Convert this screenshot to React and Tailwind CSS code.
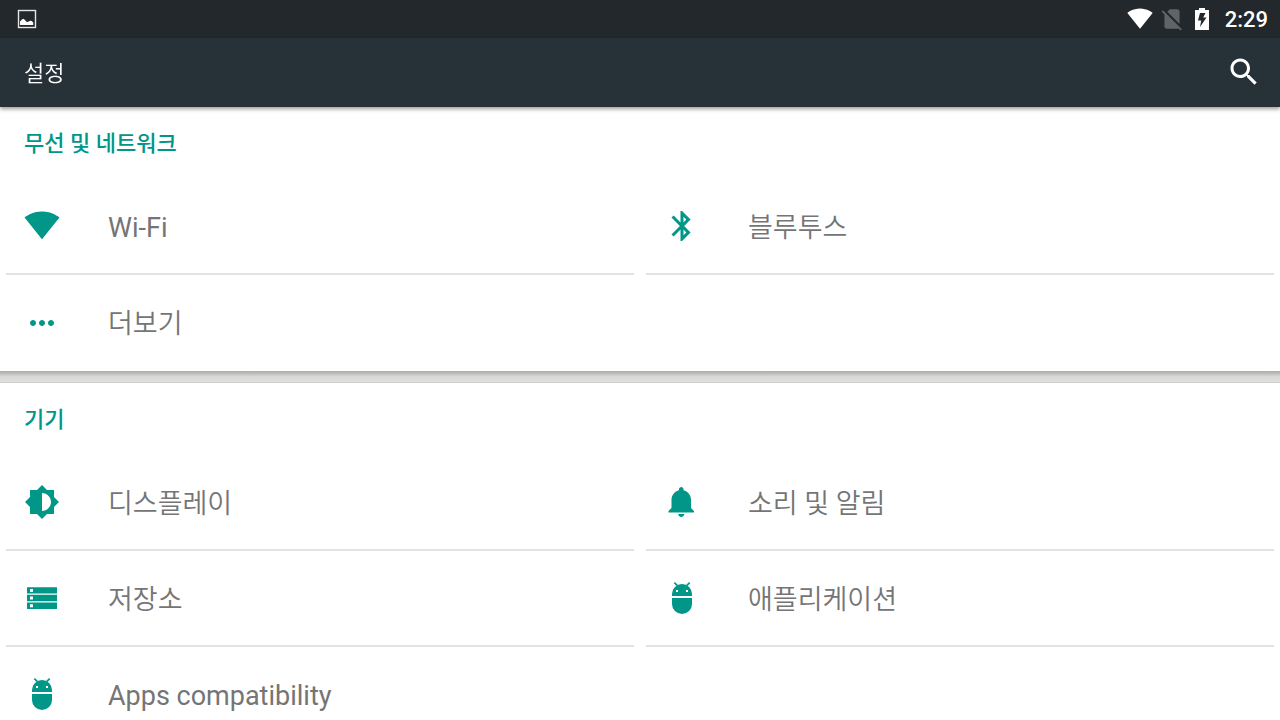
import clsx from 'clsx';

const ICONS = {
  wifi: 'M12.01 20.9L23.64 6.4c-.45-.34-4.93-4-11.64-4C5.28 2.4.81 6.06.36 6.4l11.63 14.49.01.01.01-.01z',
  bluetooth:
    'M17.71 7.71L12 2h-1v7.59L6.41 5 5 6.41 10.59 12 5 17.59 6.41 19 11 14.41V22h1l5.71-5.71-4.3-4.29 4.3-4.29zM13 5.83l1.88 1.88L13 9.59V5.83zm1.88 10.46L13 18.17v-3.76l1.88 1.88z',
  more: 'M6 10.67c-1.1 0-2 .9-2 2s.9 2 2 2 2-.9 2-2-.9-2-2-2zm12 0c-1.1 0-2 .9-2 2s.9 2 2 2 2-.9 2-2-.9-2-2-2zm-6 0c-1.1 0-2 .9-2 2s.9 2 2 2 2-.9 2-2-.9-2-2-2z',
  display:
    'M20 15.31L23.31 12 20 8.69V4h-4.69L12 .69 8.69 4H4v4.69L.69 12 4 15.31V20h4.69L12 23.31 15.31 20H20v-4.69zM12 18V6c3.31 0 6 2.69 6 6s-2.69 6-6 6z',
  sound:
    'M11.5 22c1.1 0 2-.9 2-2h-4c0 1.1.9 2 2 2zm6.5-6v-5.5c0-3.07-2.13-5.64-5-6.32V3.5c0-.83-.67-1.5-1.5-1.5S10 2.67 10 3.5v.68c-2.87.68-5 3.25-5 6.32V16l-2 2v1h17v-1l-2-2z',
  storage:
    'M2 4.8v4.2h20V4.8H2zm4 3.2H4V6h2v2zM2 9.9v4.2h20V9.9H2zm4 3.1H4v-2h2v2zM2 15v4.3h20V15H2zm4 3.2H4v-2h2v2z',
  android:
    'M5.33 12h13.34v4a6.67 6.67 0 0 1-13.34 0zM5.33 10.67V9.33a6.67 6.67 0 0 1 13.34 0v1.34zM8 6.67V8h1.33V6.67zM14.67 6.67V8H16V6.67zM7.3 1.3l2 2-1 .7-1.8-1.9zM16.7 1.3l-2 2 1 .7 1.8-1.9z',
  search:
    'M15.5 14h-.79l-.28-.27C15.41 12.59 16 11.11 16 9.5 16 5.91 13.09 3 9.5 3S3 5.91 3 9.5 5.91 16 9.5 16c1.61 0 3.09-.59 4.23-1.57l.27.28v.79l5 4.99L20.49 19l-4.99-5zm-6 0C7.01 14 5 11.99 5 9.5S7.01 5 9.5 5 14 7.01 14 9.5 11.99 14 9.5 14z',
  noSim:
    'M18.99 5c0-1.1-.89-2-1.99-2h-7L7.66 5.34 19 16.68 18.99 5zM3.65 3.88L2.38 5.15 5 7.77V19c0 1.1.9 2 2 2h10.01c.35 0 .67-.1.96-.26l1.88 1.88 1.27-1.27L3.65 3.88z',
};

const SECTIONS = [
  {
    title: '무선 및 네트워크',
    items: [
      { icon: 'wifi', label: 'Wi-Fi' },
      { icon: 'bluetooth', label: '블루투스' },
      { icon: 'more', label: '더보기' },
    ],
  },
  {
    title: '기기',
    items: [
      { icon: 'display', label: '디스플레이' },
      { icon: 'sound', label: '소리 및 알림' },
      { icon: 'storage', label: '저장소' },
      { icon: 'android', label: '애플리케이션' },
      { icon: 'android', label: 'Apps compatibility' },
    ],
  },
];

// Hangul is set lighter so that its strokes sit evenly beside Roboto
const isHangul = (text) => /[가-힣]/.test(text);

const Icon = ({ name, className }) => (
  <svg viewBox="0 0 24 24" fill="currentColor" fillRule="evenodd" aria-hidden="true" className={className}>
    <path d={ICONS[name]} />
  </svg>
);

const StatusBar = () => (
  <div className="flex h-[38px] shrink-0 items-center justify-between bg-[#22282b] pr-3 pl-[17px] text-white">
    {/* Screenshot notification */}
    <svg viewBox="0 0 20 20" className="size-5" aria-hidden="true">
      <rect x="1.5" y="1.5" width="17" height="17" fill="none" stroke="#e4e5e5" strokeWidth="1.4" />
      <path d="M3 16v-3.500l2-2 1.200-.8 1.500 1 2 2.300 1.500-.3 2-1 1.500.3 1.500 1.500V16z" fill="#fff" />
    </svg>
    <div className="flex items-center">
      <Icon name="wifi" className="size-[26px]" />
      <Icon name="noSim" className="ml-1.5 size-[26px] text-[#5f6466]" />
      <svg viewBox="0 0 14 22" className="ml-2.5 h-[22px] w-3.5" fill="currentColor" aria-hidden="true">
        <path fillRule="evenodd" d="M4 0h6v2h4v20H0V2h4zM5 5L3 12.500h3.200L5 19 11.500 9.500H8.200L10.500 5z" />
      </svg>
      <span className="ml-4 pt-0.5 text-[22px] leading-none font-medium">2:29</span>
    </div>
  </div>
);

const SettingItem = ({ icon, label, divider }) => (
  <button
    type="button"
    className={clsx(
      'mx-1.5 flex h-24 items-center border-b-2 pl-[18px] text-left hover:bg-gray-50',
      divider ? 'border-[#e2e2e2]' : 'border-transparent'
    )}
  >
    <Icon name={icon} className="size-9 text-[#009688]" />
    <span className={clsx('ml-12 pt-[3px] text-[27px] leading-9 text-[#757575]', isHangul(label) && 'font-[350]')}>
      {label}
    </span>
  </button>
);

const Section = ({ title, items }) => {
  // The last row of the two-column grid has no divider
  const lastRowStart = items.length - (items.length % 2 || 2);

  return (
    <section className="bg-white">
      <h2 className="flex h-[72px] items-center px-6 text-[22px] font-medium text-[#009688]">{title}</h2>
      <div className="grid grid-cols-2">
        {items.map((item, index) => (
          <SettingItem key={item.label} icon={item.icon} label={item.label} divider={index < lastRowStart} />
        ))}
      </div>
    </section>
  );
};

const App = () => {
  return (
    <div className="flex h-screen flex-col bg-white font-['Roboto','Noto_Sans_CJK_KR',sans-serif]">
      <StatusBar />
      <header className="z-10 flex h-[69px] shrink-0 items-center justify-between bg-[#263238] pr-[18px] pb-0.5 pl-6 text-white shadow-[0_2px_4px_rgba(0,0,0,0.4)]">
        <h1 className="pt-1 text-[22px] font-[350]">설정</h1>
        <button type="button" aria-label="검색">
          <Icon name="search" className="size-9" />
        </button>
      </header>
      <main className="flex-1 overflow-y-auto [scrollbar-width:none]">
        {SECTIONS.map((section, index) => (
          <div key={section.title}>
            {index > 0 && (
              <div className="h-3 border-b border-[#cfcfcd] bg-linear-to-b from-[#b2b2b1] from-10% via-[#d8d8d6] via-50% to-[#e0e0de]" />
            )}
            <Section title={section.title} items={section.items} />
          </div>
        ))}
      </main>
    </div>
  );
};

export default App;
